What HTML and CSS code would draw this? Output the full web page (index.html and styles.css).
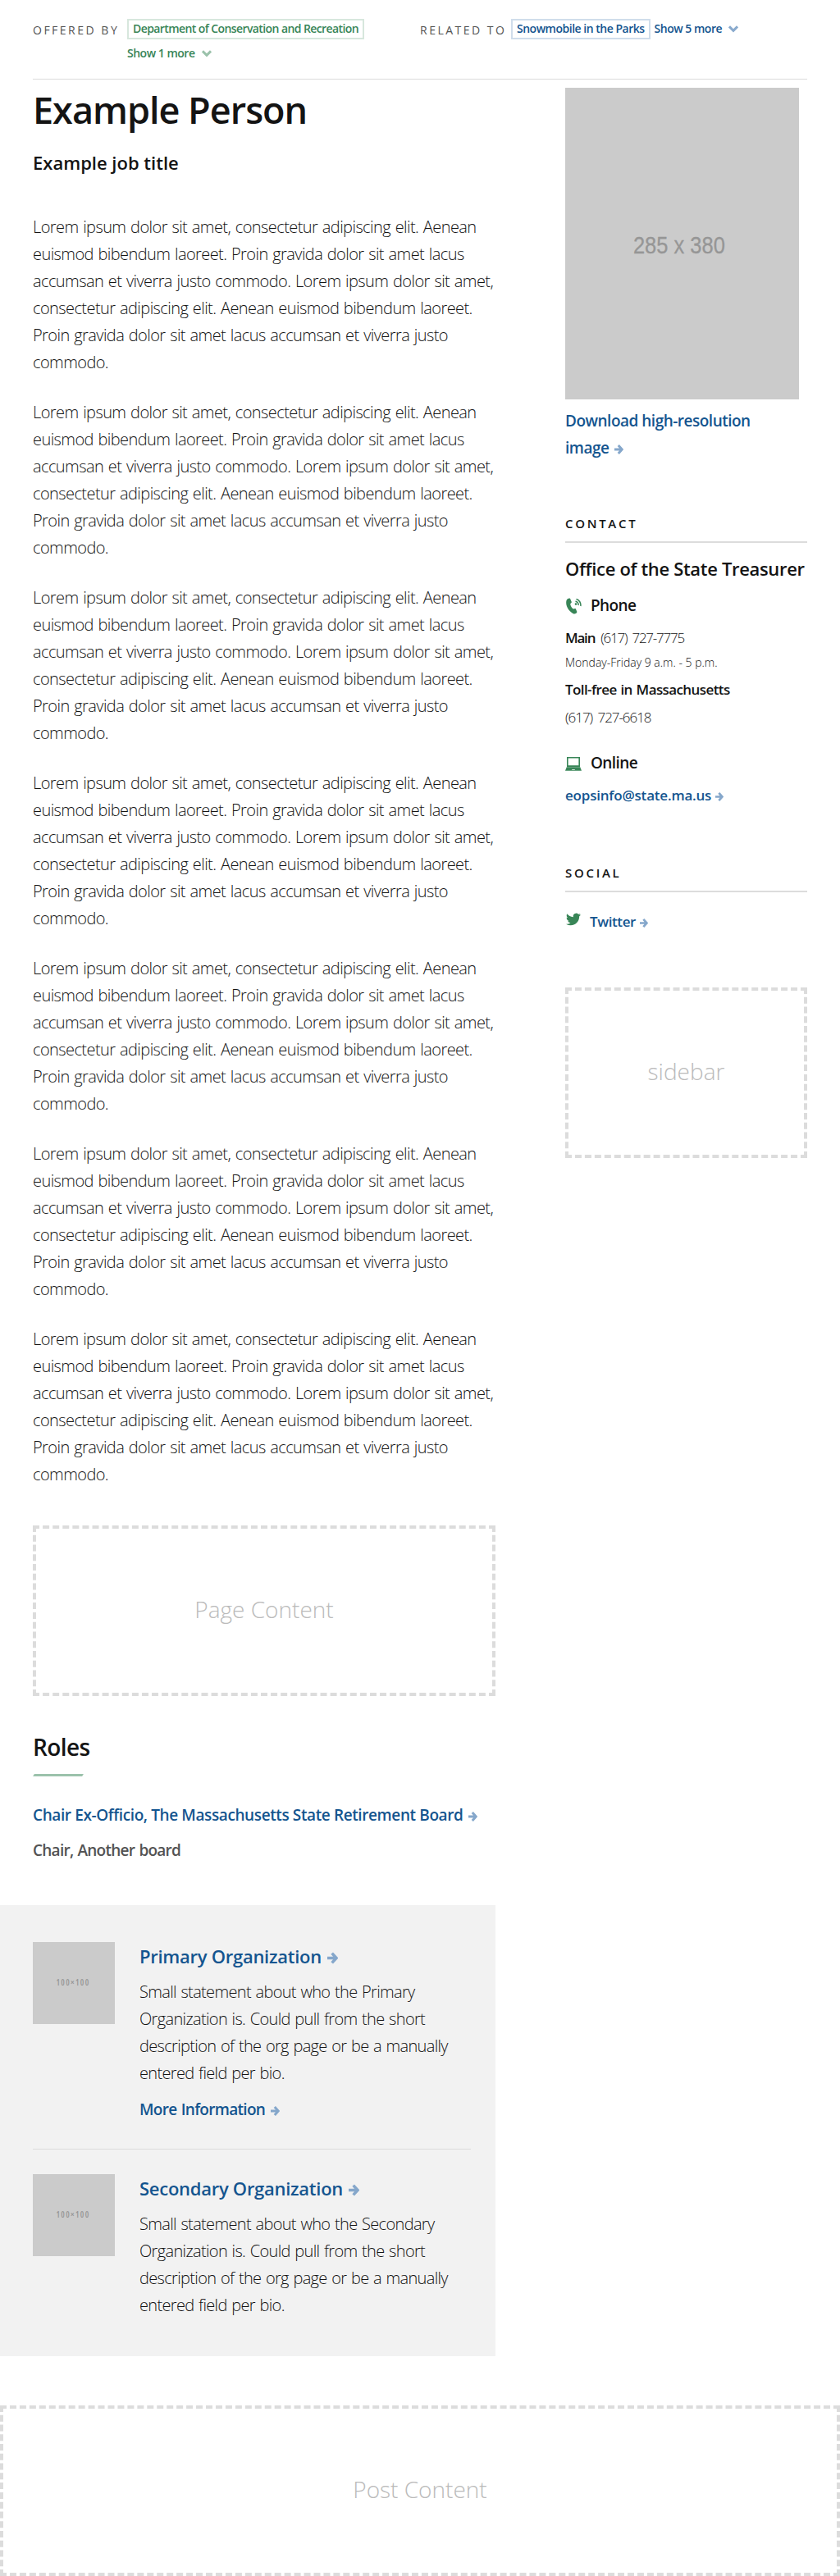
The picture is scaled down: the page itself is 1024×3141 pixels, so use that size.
FILE: index.html
```html
<!DOCTYPE html>
<html lang="en">
<head>
<meta charset="utf-8">
<title>Example Person</title>
<link rel="stylesheet" href="styles.css">
</head>
<body>
<svg class="sprite" aria-hidden="true">
  <symbol id="arrow" viewBox="0 0 11 12"><path d="M0 6H8.5M4.8 1L9.3 6L4.8 11" fill="none" stroke="currentColor" stroke-width="3"/></symbol>
  <symbol id="chevron" viewBox="0 0 12 9"><path d="M1 1.3L6 6.3L11 1.3" fill="none" stroke="currentColor" stroke-width="3"/></symbol>
  <symbol id="phone" viewBox="0 0 19 20"><path d="M1 2.2C2 .8 3.9-.1 5 .8L6.8 4.9C7 6 6 6.4 5.2 7.2C5.5 9.8 7 12.2 9 13.6C10 13.2 10.8 12.6 11.8 13.2L13.4 17C13.4 18.8 11 20 9.3 19.4C4.8 17.3 .1 11.5 .2 6C.2 4.4 .4 3 1 2.2Z" fill="currentColor"/><circle cx="12" cy="7.6" r="1.3" fill="currentColor"/><path d="M11.5 4.2A4 4 0 0 1 15 9M12.5 1.500A7.500 7.500 0 0 1 17.800 10" fill="none" stroke="currentColor" stroke-width="1.5"/></symbol>
  <symbol id="laptop" viewBox="0 0 20 17"><path d="M2 0H18V12H2ZM3.6 1.6V10.3H16.4V1.6Z" fill="currentColor" fill-rule="evenodd"/><path d="M1.8 12.3H18.2L20 16.8H0ZM8.2 15.2V16.1H11.8V15.2Z" fill="currentColor" fill-rule="evenodd"/></symbol>
  <symbol id="bird" viewBox="0 0 24 24"><path d="M23.950 4.570a10 10 0 0 1-2.820.770 4.960 4.960 0 0 0 2.160-2.720c-.950.560-2 .960-3.130 1.180a4.920 4.920 0 0 0-8.380 4.480C7.690 8.090 4.070 6.130 1.640 3.160a4.820 4.820 0 0 0-.660 2.480c0 1.710.870 3.210 2.190 4.100a4.900 4.900 0 0 1-2.230-.620v.060a4.920 4.920 0 0 0 3.950 4.830 5 5 0 0 1-2.210.080 4.940 4.940 0 0 0 4.600 3.420A9.870 9.870 0 0 1 0 19.540a13.990 13.990 0 0 0 7.550 2.210c9.050 0 14-7.500 14-13.980 0-.210 0-.420-.020-.630a9.940 9.940 0 0 0 2.460-2.550z" fill="currentColor"/></symbol>
</svg>

<header class="relations">
  <div class="relation relation-offered">
    <span class="relation-label">Offered by</span>
    <div class="relation-items green">
      <a class="tag tag-long">Department of Conservation and Recreation</a>
      <a class="more">Show 1 more <svg class="chevron"><use href="#chevron"/></svg></a>
    </div>
  </div>
  <div class="relation">
    <span class="relation-label">Related to</span>
    <div class="relation-items blue">
      <a class="tag">Snowmobile in the Parks</a>
      <a class="more">Show 5 more <svg class="chevron"><use href="#chevron"/></svg></a>
    </div>
  </div>
</header>

<main class="layout">
  <div class="content">
    <h1>Example Person</h1>
    <h2 class="job">Example job title</h2>
    <div class="bio">
      <p>Lorem ipsum dolor sit amet, consectetur adipiscing elit. Aenean euismod bibendum laoreet. Proin gravida dolor sit amet lacus accumsan et viverra justo commodo. Lorem ipsum dolor sit amet, consectetur adipiscing elit. Aenean euismod bibendum laoreet. Proin gravida dolor sit amet lacus accumsan et viverra justo commodo.</p>
      <p>Lorem ipsum dolor sit amet, consectetur adipiscing elit. Aenean euismod bibendum laoreet. Proin gravida dolor sit amet lacus accumsan et viverra justo commodo. Lorem ipsum dolor sit amet, consectetur adipiscing elit. Aenean euismod bibendum laoreet. Proin gravida dolor sit amet lacus accumsan et viverra justo commodo.</p>
      <p>Lorem ipsum dolor sit amet, consectetur adipiscing elit. Aenean euismod bibendum laoreet. Proin gravida dolor sit amet lacus accumsan et viverra justo commodo. Lorem ipsum dolor sit amet, consectetur adipiscing elit. Aenean euismod bibendum laoreet. Proin gravida dolor sit amet lacus accumsan et viverra justo commodo.</p>
      <p>Lorem ipsum dolor sit amet, consectetur adipiscing elit. Aenean euismod bibendum laoreet. Proin gravida dolor sit amet lacus accumsan et viverra justo commodo. Lorem ipsum dolor sit amet, consectetur adipiscing elit. Aenean euismod bibendum laoreet. Proin gravida dolor sit amet lacus accumsan et viverra justo commodo.</p>
      <p>Lorem ipsum dolor sit amet, consectetur adipiscing elit. Aenean euismod bibendum laoreet. Proin gravida dolor sit amet lacus accumsan et viverra justo commodo. Lorem ipsum dolor sit amet, consectetur adipiscing elit. Aenean euismod bibendum laoreet. Proin gravida dolor sit amet lacus accumsan et viverra justo commodo.</p>
      <p>Lorem ipsum dolor sit amet, consectetur adipiscing elit. Aenean euismod bibendum laoreet. Proin gravida dolor sit amet lacus accumsan et viverra justo commodo. Lorem ipsum dolor sit amet, consectetur adipiscing elit. Aenean euismod bibendum laoreet. Proin gravida dolor sit amet lacus accumsan et viverra justo commodo.</p>
      <p>Lorem ipsum dolor sit amet, consectetur adipiscing elit. Aenean euismod bibendum laoreet. Proin gravida dolor sit amet lacus accumsan et viverra justo commodo. Lorem ipsum dolor sit amet, consectetur adipiscing elit. Aenean euismod bibendum laoreet. Proin gravida dolor sit amet lacus accumsan et viverra justo commodo.</p>
    </div>
    <div class="placeholder">Page Content</div>

    <section class="roles">
      <h2>Roles</h2>
      <div class="bar"></div>
      <ul>
        <li><a>Chair Ex-Officio, The Massachusetts State Retirement Board <svg class="arrow"><use href="#arrow"/></svg></a></li>
        <li class="plain">Chair, Another board</li>
      </ul>
    </section>

    <section class="orgs">
      <article class="org">
        <div class="thumb">100×100</div>
        <div class="org-body">
          <h3><a>Primary Organization <svg class="arrow arrow-lg"><use href="#arrow"/></svg></a></h3>
          <p>Small statement about who the Primary Organization is. Could pull from the short description of the org page or be a manually entered field per bio.</p>
          <a class="org-more">More Information <svg class="arrow"><use href="#arrow"/></svg></a>
        </div>
      </article>
      <article class="org">
        <div class="thumb">100×100</div>
        <div class="org-body">
          <h3><a>Secondary Organization <svg class="arrow arrow-lg"><use href="#arrow"/></svg></a></h3>
          <p>Small statement about who the Secondary Organization is. Could pull from the short description of the org page or be a manually entered field per bio.</p>
        </div>
      </article>
    </section>
  </div>

  <aside class="sidebar">
    <div class="portrait"><span>285 x 380</span></div>
    <a class="download">Download high-resolution<br>image <svg class="arrow"><use href="#arrow"/></svg></a>

    <h2 class="side-title contact-title">Contact</h2>
    <h3 class="office">Office of the State Treasurer</h3>
    <h4 class="group"><svg class="icon-phone"><use href="#phone"/></svg>Phone</h4>
    <p class="line"><b class="main-label">Main</b> <span class="num">(617) 727-7775</span></p>
    <p class="hours">Monday-Friday 9 a.m. - 5 p.m.</p>
    <p class="line toll"><b>Toll-free in Massachusetts</b></p>
    <p class="line toll-num">(617) 727-6618</p>
    <h4 class="group online"><svg class="icon-laptop"><use href="#laptop"/></svg>Online</h4>
    <p class="line email"><a>eopsinfo@state.ma.us<svg class="arrow arrow-sm"><use href="#arrow"/></svg></a></p>

    <h2 class="side-title social-title">Social</h2>
    <p class="twitter"><svg class="icon-bird"><use href="#bird"/></svg><a>Twitter<svg class="arrow arrow-sm"><use href="#arrow"/></svg></a></p>
    <div class="placeholder side-placeholder">sidebar</div>
  </aside>
</main>

<div class="placeholder post">Post Content</div>
</body>
</html>
```

FILE: styles.css
```css
* { box-sizing: border-box; }
body {
  margin: 0;
  background: #fff;
  color: #141414;
  font-family: "Open Sans", "Noto Sans", sans-serif;
  font-size: 20px;
  font-weight: 300;
  line-height: 33px;
}
h1, h2, h3, h4, p, ul { margin: 0; padding: 0; font-weight: 600; }
p { font-weight: 300; }
ul { list-style: none; }
a { color: #14558f; font-weight: 600; }
b { font-weight: 600; }
.sprite { display: block; width: 0; height: 0; position: absolute; }

.arrow { width: 11px; height: 12px; margin-left: 2px; color: #85a7cb; vertical-align: -1px; }
.arrow-lg { width: 13px; height: 15px; vertical-align: -1px; }
.arrow-sm { width: 10px; height: 11px; margin-left: 5px; }

/* Offered by / related to */
.relations {
  display: flex;
  height: 97px;
  margin: 0 40px;
  padding-top: 23px;
  border-bottom: 1px solid #dcdcdc;
}
.relation { display: flex; }
.relation-offered { width: 472px; }
.relation-label {
  color: #535353;
  font-size: 14px;
  font-weight: 500;
  line-height: 25px;
  letter-spacing: 2.5px;
  text-transform: uppercase;
  white-space: nowrap;
  padding-top: 1px;
  width: 115px;
}
.relation:not(.relation-offered) .relation-label { width: 111px; }
.relation-items {
  display: flex;
  flex-wrap: wrap;
  align-content: flex-start;
  column-gap: 5px;
  row-gap: 5px;
}
.relation-offered .relation-items { width: 320px; }
.tag, .more {
  height: 25px;
  font-size: 14px;
  line-height: 20px;
  letter-spacing: -0.49px;
  white-space: nowrap;
}
.tag { border: 2px solid; padding: 0 5px; }
.tag-long { letter-spacing: -0.59px; }
.more { padding-top: 2px; }
.green a { color: #388557; }
.green .tag { border-color: #d7e7dd; }
.green .chevron { color: #9bc2ab; }
.blue .tag { border-color: #d0ddeb; }
.blue .chevron { color: #89aacd; }
.chevron { width: 12px; height: 9px; margin-left: 5px; }

/* Two-column layout */
.layout {
  display: grid;
  grid-template-columns: 564px 295px;
  column-gap: 85px;
  margin-left: 40px;
}
h1 {
  margin-top: 10px;
  font-size: 45px;
  line-height: 54px;
  letter-spacing: -1px;
}
.job { margin: 22px 0 47px; font-size: 22px; line-height: 30px; }
.bio { margin-bottom: 46px; letter-spacing: -0.58px; word-spacing: 1px; }
.bio p + p { margin-top: 28px; }

.placeholder {
  display: flex;
  align-items: center;
  justify-content: center;
  height: 208px;
  padding-bottom: 4px;
  border: 4px dashed #dcdcdc;
  color: #bababa;
  font-size: 28px;
}
.post { margin-top: 60px; }

/* Roles */
.roles { margin: 44px 0 50px; }
.roles h2 { font-size: 28px; line-height: 36px; letter-spacing: -0.6px; }
.bar {
  width: 60px;
  height: 3px;
  margin: 15px 0 31px 1px;
  background: #9bc2ab;
  transform: skewX(-30deg);
}
.roles li { font-size: 19px; letter-spacing: -0.39px; white-space: nowrap; }
.roles li + li { margin-top: 10px; }
.roles .plain { color: #535353; font-weight: 600; letter-spacing: -0.75px; word-spacing: 1px; }

/* Organizations */
.orgs {
  height: 550px;
  margin-left: -40px;
  padding: 45px 30px 0 40px;
  background: #f2f2f2;
}
.org { display: flex; gap: 30px; }
.org + .org { margin-top: 31px; padding-top: 30px; border-top: 1px solid #dcdcdc; }
.thumb {
  flex: 0 0 100px;
  height: 100px;
  padding-right: 2px;
  background: #cbcbcb;
  color: #969696;
  font: 600 10px/99px "Open Sans", sans-serif;
  font-stretch: condensed;
  letter-spacing: 1.4px;
  text-align: center;
}
.org-body { flex: 1; padding-top: 2px; }
.org h3 { font-size: 22px; line-height: 30px; letter-spacing: -0.27px; }
.org p { margin: 12px 0; letter-spacing: -0.66px; word-spacing: 1px; }
.org:last-child p { margin-bottom: 0; }
.org-more { display: block; font-size: 19px; letter-spacing: -0.7px; word-spacing: 1px; }

/* Sidebar */
.portrait {
  display: flex;
  align-items: center;
  justify-content: center;
  width: 285px;
  height: 380px;
  margin-top: 10px;
  padding: 3px 8px 0 0;
  background: #cbcbcb;
  color: #969696;
  font: 30px/34px "Liberation Sans", Arial, sans-serif;
}
.portrait span { transform: scaleX(0.85); -webkit-text-stroke: 0.3px #969696; }
.download { display: block; margin-top: 10px; font-size: 19px; letter-spacing: -0.5px; }
.side-title {
  padding-bottom: 10px;
  border-bottom: 2px solid #dcdcdc;
  font-size: 15px;
  line-height: 24px;
  letter-spacing: 2.7px;
  text-transform: uppercase;
}
.contact-title { margin: 63px 0 16px; }
.office { font-size: 22px; line-height: 30px; letter-spacing: -0.33px; white-space: nowrap; }
.group {
  display: flex;
  margin: 16px 0 9px;
  font-size: 19px;
  line-height: 28px;
  letter-spacing: -0.6px;
}
.icon-phone, .icon-laptop, .icon-bird { color: #388557; }
.icon-phone { width: 19px; height: 20px; margin: 5px 11px 0 1px; }
.icon-laptop { width: 20px; height: 17px; margin: 7px 11px 0 0; }
.line { font-size: 17px; letter-spacing: -0.5px; }
.main-label { margin-right: 3px; letter-spacing: -1.2px; }
.num { letter-spacing: -1.25px; word-spacing: 3px; }
.hours { margin: 1px 0 3px; font-size: 14px; line-height: 26px; }
.toll b { letter-spacing: -0.6px; word-spacing: 1px; }
.toll-num { margin-top: 1px; letter-spacing: -1.05px; word-spacing: 3px; }
.online { margin-top: 25px; }
.email { letter-spacing: -0.2px; }
.social-title { margin: 66px 0 19px; }
.twitter { display: flex; font-size: 17px; letter-spacing: -0.4px; }
.icon-bird { width: 18px; height: 18px; margin: 5px 11px 0 1px; }
.side-placeholder { margin-top: 64px; }
```
